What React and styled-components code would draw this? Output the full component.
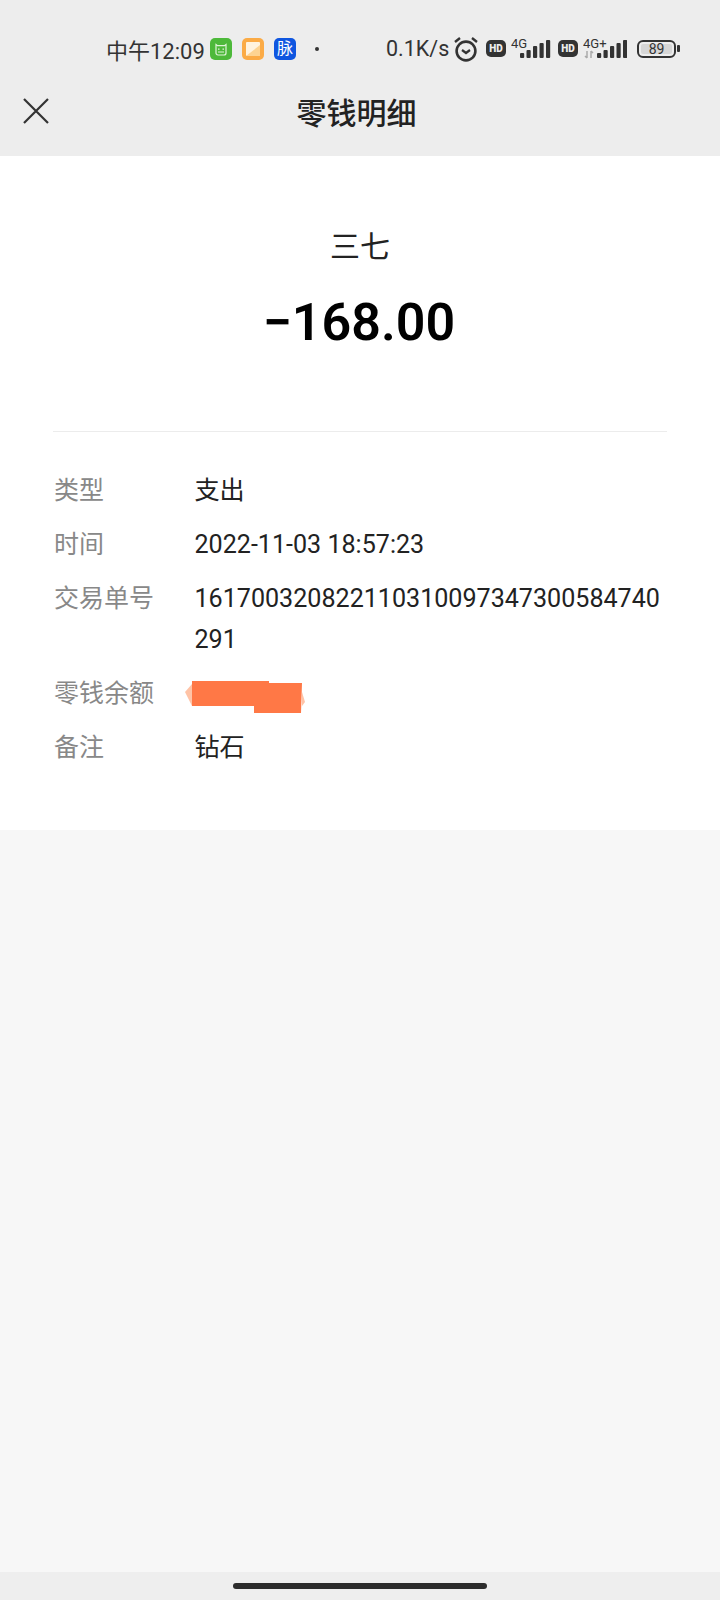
import React from "react";
import styled, { createGlobalStyle } from "styled-components";

const GlobalStyle = createGlobalStyle`
  html, body {
    margin: 0;
    padding: 0;
    background: #f7f7f7;
  }
`;

const FONT = `Roboto, "Noto Sans CJK SC", sans-serif`;

const rows = [
  { label: "类型", value: "支出" },
  { label: "时间", value: "2022-11-03 18:57:23" },
  { label: "交易单号", value: "161700320822110310097347300584740291" },
  { label: "零钱余额", redacted: true },
  { label: "备注", value: "钻石" },
];

const BAR_TOPS = [16, 13, 9, 6, 3];

const Signal = ({ plus }) => {
  const start = plus ? 14 : 9;
  return (
    <SignalBox $wide={plus}>
      <svg width={plus ? 44 : 40} height="24" viewBox={plus ? "0 0 44 24" : "0 0 40 24"}>
        <text x="0" y="10.5" fontFamily="Roboto, sans-serif" fontSize="13" fill="#333">
          {plus ? "4G+" : "4G"}
        </text>
        {plus && (
          <path d="M4 14v7M2 19l2 2M8 21v-7M8 14l2 2" stroke="#aaa" strokeWidth="1.5" fill="none" />
        )}
        <g fill="#333">
          {BAR_TOPS.map((top, i) => (
            <rect key={i} x={start + i * 6.5} y={top} width="4.2" height={21 - top} rx="1" />
          ))}
        </g>
      </svg>
    </SignalBox>
  );
};

const App = () => {
  return (
    <Page>
      <GlobalStyle />
      <Header>
        <StatusBar>
          <StatusLeft>
            <Time>中午12:09</Time>
            <NotifyIcons>
              <AppIcon $bg="#4db93a">
                <svg width="16" height="16" viewBox="0 0 16 16" fill="none" stroke="#dff3d8" strokeWidth="1.2">
                  <path d="M3 3.5l1.5 1.2h7L13 3.5v8.5a2 2 0 0 1-2 2H5a2 2 0 0 1-2-2z" />
                  <path d="M5 8.2h1.5M9.5 8.2H11M5 11h6" />
                </svg>
              </AppIcon>
              <AppIcon $bg="#fbab46">
                <svg width="14" height="14" viewBox="0 0 14 14">
                  <rect width="14" height="14" rx="1" fill="#fff3df" />
                  <path d="M0 14L14 3v11z" fill="#fdd391" />
                </svg>
              </AppIcon>
              <AppIcon $bg="#0f56e0" $color="#fff">脉</AppIcon>
            </NotifyIcons>
            <Dot />
          </StatusLeft>
          <StatusRight>
            <Speed>0.1K/s</Speed>
            <svg width="26" height="26" viewBox="0 0 26 26" fill="none" stroke="#333" strokeWidth="2.6">
              <circle cx="13" cy="15" r="9.4" />
              <path d="M9 14l4 3 4-3" strokeWidth="2.2" />
              <path d="M2 6l5-4M24 6l-5-4" strokeWidth="2.4" />
            </svg>
            <HdBadge>HD</HdBadge>
            <Signal />
            <HdBadge>HD</HdBadge>
            <Signal plus />
            <Battery>
              <BatteryBody>
                <BatteryLevel>89</BatteryLevel>
              </BatteryBody>
              <BatteryTip />
            </Battery>
          </StatusRight>
        </StatusBar>
        <TitleBar>
          <CloseIcon width="26" height="26" viewBox="0 0 26 26" fill="none" stroke="#333" strokeWidth="2.2">
            <path d="M1 1l24 24M25 1L1 25" />
          </CloseIcon>
          <Title>零钱明细</Title>
        </TitleBar>
      </Header>

      <Card>
        <Summary>
          <Payee>三七</Payee>
          <Amount>−168.00</Amount>
        </Summary>
        <Divider />
        <Details>
          {rows.map((row) => (
            <Row key={row.label}>
              <Label>{row.label}</Label>
              {row.redacted ? (
                <Value>
                  <Redaction width="122" height="40" viewBox="0 0 122 40">
                    <path d="M0 14l7-8v22z" fill="#ffc3a6" />
                    <path d="M117 14l3 10-3 4z" fill="#ffc3a6" />
                    <path d="M7 3h77v2h33l-1 30H69v-7H7z" fill="#ff7846" />
                  </Redaction>
                </Value>
              ) : (
                <Value>{row.value}</Value>
              )}
            </Row>
          ))}
        </Details>
      </Card>

      <Spacer />
      <NavBar>
        <HomeIndicator />
      </NavBar>
    </Page>
  );
};

export default App;

const Page = styled.div`
  width: 720px;
  height: 1600px;
  display: flex;
  flex-direction: column;
  background: #f7f7f7;
  font-family: ${FONT};
  overflow: hidden;
`;

const Header = styled.header`
  height: 156px;
  flex: none;
  background: #ededed;
  box-shadow: 0 1px 2px rgba(0, 0, 0, 0.06);
  display: flex;
  flex-direction: column;
`;

const StatusBar = styled.div`
  height: 76px;
  padding: 21px 40px 0 106px;
  box-sizing: border-box;
  display: flex;
  align-items: center;
  justify-content: space-between;
  color: #333;
`;

const StatusLeft = styled.div`
  display: flex;
  align-items: center;
`;

const Time = styled.span`
  font-size: 22px;
  width: 104px;
  white-space: nowrap;
`;

const NotifyIcons = styled.div`
  display: flex;
  gap: 10px;
`;

const AppIcon = styled.span`
  width: 22px;
  height: 22px;
  border-radius: 5px;
  background: ${(p) => p.$bg};
  color: ${(p) => p.$color || "#fff"};
  font-size: 16px;
  line-height: 22px;
  display: flex;
  align-items: center;
  justify-content: center;
`;

const Dot = styled.span`
  width: 4px;
  height: 4px;
  border-radius: 50%;
  background: #333;
  margin-left: 19px;
`;

const StatusRight = styled.div`
  display: flex;
  align-items: center;
  gap: 5px;
`;

const Speed = styled.span`
  font-size: 21.5px;
  white-space: nowrap;
  width: 62px;
`;

const HdBadge = styled.span`
  width: 20px;
  height: 17px;
  margin-left: 2px;
  border-radius: 5px;
  background: #333;
  color: #ededed;
  font-size: 10px;
  font-weight: 900;
  display: flex;
  align-items: center;
  justify-content: center;
`;

const SignalBox = styled.span`
  width: ${(p) => (p.$wide ? 44 : 40)}px;
  height: 24px;
  margin-right: ${(p) => (p.$wide ? 5 : 0)}px;
`;

const Battery = styled.span`
  display: flex;
  align-items: center;
  gap: 1px;
`;

const BatteryBody = styled.span`
  width: 39px;
  height: 18px;
  padding: 2px;
  box-sizing: border-box;
  border: 2px solid #333;
  border-radius: 6px;
  display: flex;
`;

const BatteryLevel = styled.span`
  flex: 1;
  background: #d6d6d6;
  border-radius: 2px;
  color: #333;
  font-size: 14px;
  line-height: 10px;
  text-align: center;
`;

const BatteryTip = styled.span`
  width: 3px;
  height: 7px;
  border-radius: 1px;
  background: #333;
`;

const TitleBar = styled.div`
  flex: 1;
  position: relative;
  display: flex;
  align-items: center;
  justify-content: center;
  padding: 0 7px 11px 0;
`;

const CloseIcon = styled.svg`
  position: absolute;
  left: 23px;
  top: 22px;
`;

const Title = styled.h1`
  margin: 0;
  font-size: 30px;
  font-weight: 500;
  color: #222;
`;

const Card = styled.main`
  height: 674px;
  flex: none;
  background: #fff;
  padding: 0 53px;
  box-sizing: border-box;
`;

const Summary = styled.section`
  height: 275px;
  padding-top: 70px;
  box-sizing: border-box;
  display: flex;
  flex-direction: column;
  align-items: center;
`;

const Payee = styled.div`
  font-size: 30px;
  line-height: 42px;
  color: #222;
`;

const Amount = styled.div`
  margin-top: 22px;
  margin-right: 2px;
  font-size: 52px;
  line-height: 66px;
  font-weight: 600;
  color: #000;
`;

const Divider = styled.hr`
  margin: 0;
  border: 0;
  height: 1px;
  background: #ececec;
`;

const Details = styled.dl`
  margin: 38px 0 0 1px;
  display: flex;
  flex-direction: column;
  gap: 13px;
`;

const Row = styled.div`
  display: flex;
`;

const Label = styled.dt`
  width: 140.5px;
  flex: none;
  font-size: 25px;
  line-height: 41px;
  color: #888;
`;

const Value = styled.dd`
  margin: 0;
  min-width: 0;
  position: relative;
  flex: 1;
  font-size: 25.1px;
  line-height: 41px;
  color: #222;
  word-break: break-all;
  min-height: 41px;
`;

const Redaction = styled.svg`
  position: absolute;
  left: -10px;
  top: 5px;
`;

const Spacer = styled.div`
  flex: 1;
`;

const NavBar = styled.footer`
  height: 28px;
  flex: none;
  background: #eeeeee;
  display: flex;
  justify-content: center;
  padding-top: 11px;
  box-sizing: border-box;
`;

const HomeIndicator = styled.div`
  width: 254px;
  height: 6px;
  border-radius: 3px;
  background: #2c2c2c;
`;
